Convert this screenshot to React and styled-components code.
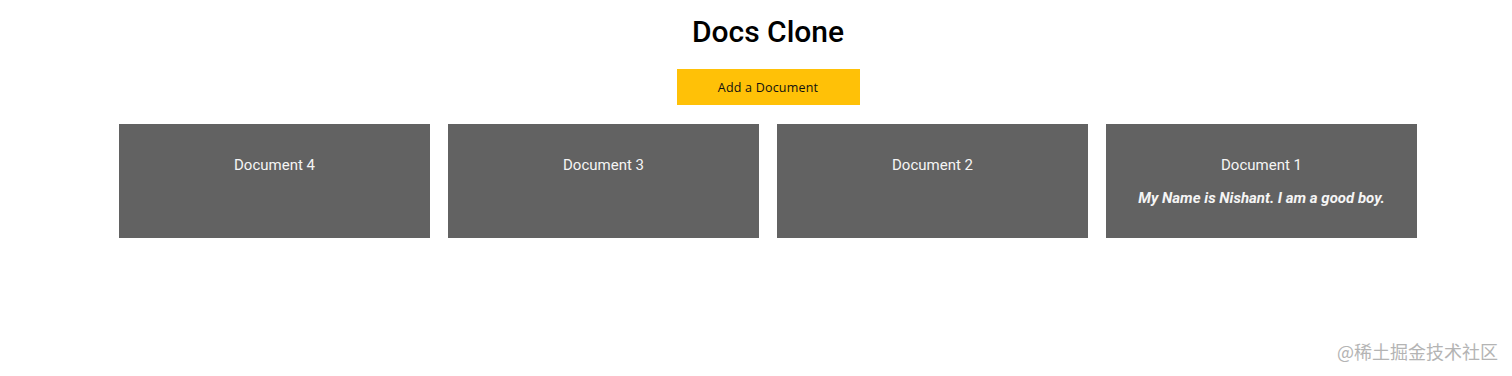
import React from 'react'
import styled, { createGlobalStyle } from 'styled-components'

const GlobalStyle = createGlobalStyle`
  html, body {
    margin: 0;
    padding: 0;
    background: #ffffff;
    overflow: hidden;
  }
  body {
    font-family: Roboto, "Liberation Sans", sans-serif;
  }
`

const Page = styled.div`
  position: relative;
  width: 1512px;
  height: 376px;
`

const Main = styled.div`
  width: 1298px;
  margin-left: 119px;
  display: flex;
  flex-direction: column;
  align-items: center;
`

const Title = styled.h1`
  margin: 14px 0 0;
  font-family: Roboto, "Liberation Sans", sans-serif;
  font-size: 30px;
  font-weight: 500;
  line-height: 36px;
  color: #000;
`

const AddButton = styled.button`
  margin-top: 19px;
  width: 183px;
  height: 36px;
  border: none;
  background: #ffc107;
  color: #111;
  font-family: "Open Sans", "Liberation Sans", sans-serif;
  font-size: 12.5px;
  letter-spacing: 0.2px;
  cursor: pointer;
`

const Grid = styled.div`
  margin-top: 19px;
  width: 100%;
  display: grid;
  grid-template-columns: repeat(4, 311px);
  gap: 18px;
`

const Card = styled.div`
  height: 114px;
  background: #626262;
  display: flex;
  flex-direction: column;
  align-items: center;
  padding-top: 32px;
  box-sizing: border-box;
  color: #f5f5f5;
`

const CardTitle = styled.div`
  font-size: 15px;
  line-height: 18px;
`

const CardBody = styled.div`
  margin-top: 15px;
  font-size: 15px;
  line-height: 18px;
  font-weight: 700;
  font-style: italic;
`

const Watermark = styled.div`
  position: absolute;
  right: 14px;
  bottom: 12px;
  font-family: "Noto Sans CJK SC", sans-serif;
  font-size: 18px;
  color: #b4b4b4;
`

const docs = [
  { id: 4, body: '' },
  { id: 3, body: '' },
  { id: 2, body: '' },
  { id: 1, body: 'My Name is Nishant. I am a good boy.' },
]

function App() {
  return (
    <Page>
      <GlobalStyle />
      <Main>
        <Title>Docs Clone</Title>
        <AddButton>Add a Document</AddButton>
        <Grid>
          {docs.map((doc) => (
            <Card key={doc.id}>
              <CardTitle>Document {doc.id}</CardTitle>
              {doc.body && <CardBody>{doc.body}</CardBody>}
            </Card>
          ))}
        </Grid>
      </Main>
      <Watermark>@稀土掘金技术社区</Watermark>
    </Page>
  )
}

export default App
